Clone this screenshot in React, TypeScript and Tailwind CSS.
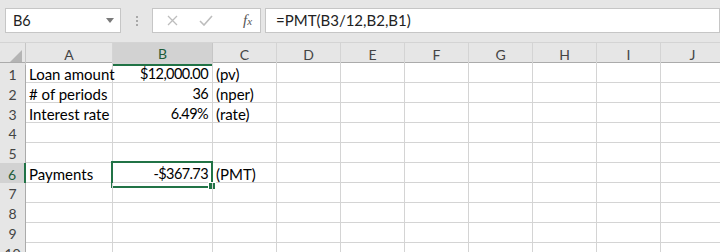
import React from 'react';

const cols = ['A', 'B', 'C', 'D', 'E', 'F', 'G', 'H', 'I', 'J'];
const font = { fontFamily: 'Lato, "Liberation Sans", sans-serif' };

type Cell = { text?: string; right?: boolean };
const data: Record<number, Record<string, Cell>> = {
    1: { A: { text: 'Loan amount' }, B: { text: '$12,000.00', right: true }, C: { text: '(pv)' } },
    2: { A: { text: '# of periods' }, B: { text: '36', right: true }, C: { text: '(nper)' } },
    3: { A: { text: 'Interest rate' }, B: { text: '6.49%', right: true }, C: { text: '(rate)' } },
    6: { A: { text: 'Payments' }, B: { text: '-$367.73', right: true }, C: { text: '(PMT)' } },
};

const gridCols = 'grid grid-cols-[26px_87px_100px_64px_64px_64px_64px_64px_64px_64px_64px]';

export default function App() {
    return (
        <div className="w-[720px] h-[252px] overflow-hidden bg-white text-[15px] text-black" style={font}>
            {/* formula bar */}
            <div className="h-[43px] bg-[#e6e6e6] flex items-start pt-[8px] pl-[5px] border-b border-[#d4d4d4]">
                <div className="w-[116px] h-[25px] bg-white border border-[#c6c6c6] flex items-center justify-between pl-[7px] pr-[6px]">
                    <span className="text-[14.5px] text-[#222]">B6</span>
                    <svg width="8" height="5" viewBox="0 0 8 5"><path d="M0 0h8L4 5z" fill="#7a7a7a" /></svg>
                </div>
                <div className="w-[31px] h-[25px] flex flex-col items-center justify-center gap-[2px]">
                    <span className="w-[2px] h-[2px] bg-[#a8a8a8]" />
                    <span className="w-[2px] h-[2px] bg-[#a8a8a8]" />
                    <span className="w-[2px] h-[2px] bg-[#a8a8a8]" />
                </div>
                <div className="w-[109px] h-[25px] bg-white border border-[#c6c6c6] flex items-center pl-[13px]">
                    <svg width="11" height="11" viewBox="0 0 11 11" className="ml-[1px]"><path d="M1 1L10 10M10 1L1 10" stroke="#bdbdbd" strokeWidth="1.3" /></svg>
                    <svg width="14" height="11" viewBox="0 0 14 11" className="ml-[21px]"><path d="M1 6l4 4L13 1" stroke="#bdbdbd" strokeWidth="1.6" fill="none" /></svg>
                    <span className="ml-[30px] text-[15px] italic text-[#555]" style={{ fontFamily: '"Liberation Serif", serif' }}>f<span className="text-[11px]">x</span></span>
                </div>
                <div className="ml-[4px] flex-1 h-[25px] bg-white border border-[#c6c6c6] flex items-center pl-[10px]">
                    <span className="text-[15px] text-[#222]">=PMT(B3/12,B2,B1)</span>
                </div>
            </div>

            {/* column headers */}
            <div className={`${gridCols} h-[20px] bg-[#e6e6e6] border-b border-[#ababab]`}>
                <div className="border-r border-[#c6c6c6] relative">
                    <svg width="12" height="12" viewBox="0 0 12 12" className="absolute right-[3px] bottom-[3px]"><path d="M12 0V12H0z" fill="#b4b4b4" /></svg>
                </div>
                {cols.map(c => (
                    <div
                        key={c}
                        className={`flex items-center justify-center text-[14px] border-r ${c === 'B' ? 'bg-[#d2d2d2] text-[#1e5d3a] border-[#c6c6c6] border-b-2 border-b-[#217346] -mb-[1px]' : 'text-[#444] border-[#d4d4d4]'}`}
                    >
                        {c}
                    </div>
                ))}
            </div>

            {/* rows */}
            {Array.from({ length: 10 }, (_, i) => i + 1).map(r => (
                <div key={r} className={`${gridCols} h-[20px] border-b border-[#d4d4d4]`}>
                    <div className={`flex items-center justify-center text-[14px] border-r ${r === 6 ? 'bg-[#d2d2d2] text-[#1e5d3a] border-r-2 border-[#217346]' : 'bg-[#e6e6e6] text-[#444] border-[#ababab]'}`}>
                        {r}
                    </div>
                    {cols.map(c => {
                        const cell = data[r]?.[c];
                        const selected = r === 6 && c === 'B';
                        return (
                            <div
                                key={c}
                                className={`relative flex items-center whitespace-nowrap px-[3px] border-r border-[#d4d4d4] ${cell?.right ? 'justify-end text-[14.5px] tracking-[-0.6px] pr-[4px]' : ''}`}
                            >
                                {cell?.text}
                                {selected && (
                                    <>
                                        <div className="absolute -left-[2px] -top-[2px] -right-[1px] -bottom-[2px] border-2 border-[#217346]" />
                                        <div className="absolute -right-[4px] -bottom-[4px] w-[6px] h-[6px] bg-[#217346] border border-white box-content" />
                                    </>
                                )}
                            </div>
                        );
                    })}
                </div>
            ))}
        </div>
    );
}
